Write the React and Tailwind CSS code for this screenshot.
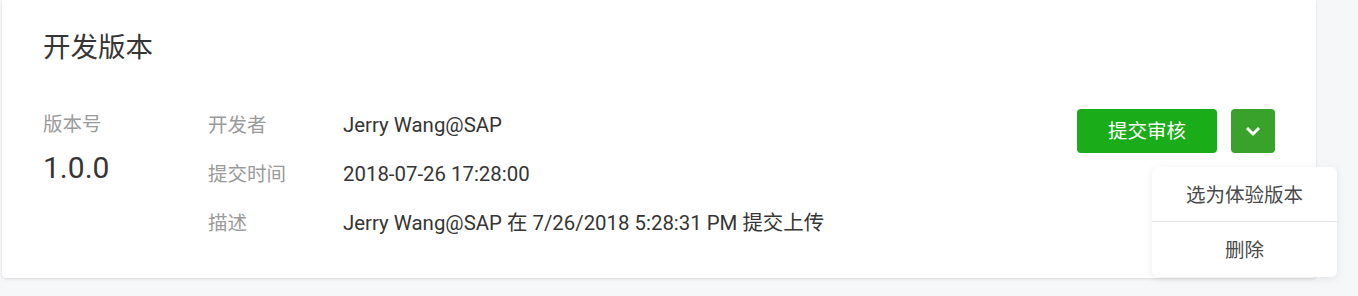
import React from "react";

const rows = [
  { label: "开发者", value: "Jerry Wang@SAP" },
  { label: "提交时间", value: "2018-07-26 17:28:00" },
  { label: "描述", value: "Jerry Wang@SAP 在 7/26/2018 5:28:31 PM 提交上传" },
];

export default function App() {
  return (
    <div
      className="relative h-[296px] w-[1358px] overflow-hidden bg-[#f6f7f9]"
      style={{ fontFamily: 'Roboto, "Noto Sans CJK SC", sans-serif' }}
    >
      {/* card */}
      <div className="ml-[2px] h-[278px] w-[1314px] rounded-b-[4px] bg-white px-[41px] pt-[30px] shadow-[0_1px_3px_rgba(0,0,0,0.12)]">
        <h2 className="text-[27.5px] leading-[36px] text-[#353535]">开发版本</h2>

        <div className="mt-[35px] flex">
          <div className="w-[165px] pt-[12px]">
            <div className="text-[19.5px] leading-[24px] text-[#9a9a9a]">版本号</div>
            <div className="mt-[11px] text-[30px] leading-[40px] text-[#353535]">1.0.0</div>
          </div>

          <div className="grid grid-cols-[135px_1fr] auto-rows-[49px] items-center text-[20.4px]">
            {rows.map((r) => (
              <React.Fragment key={r.label}>
                <div className="text-[19.5px] text-[#9a9a9a]">{r.label}</div>
                <div className="text-[#353535]">{r.value}</div>
              </React.Fragment>
            ))}
          </div>

          <div className="ml-auto mt-[8px] flex gap-[14px]">
            <button className="h-[44px] w-[140px] rounded-[4px] bg-[#1aad19] pt-[2px] text-[19.5px] text-white">
              提交审核
            </button>
            <button className="flex h-[44px] w-[44px] items-center justify-center rounded-[4px] bg-[#38a22b]">
              <svg width="16" height="11" viewBox="0 0 16 11" fill="none">
                <path d="M2 2l6 6 6-6" stroke="white" strokeWidth="3" />
              </svg>
            </button>
          </div>
        </div>
      </div>

      {/* dropdown menu */}
      <div className="absolute left-[1152px] top-[167px] w-[185px] rounded-[6px] bg-white shadow-[0_2px_10px_rgba(0,0,0,0.08)]">
        <div className="flex h-[55px] items-center justify-center border-b border-[#e7e7eb] pt-[3px] text-[19.5px] text-[#4a4a4a]">
          选为体验版本
        </div>
        <div className="flex h-[55px] items-center justify-center pt-[3px] text-[19.5px] text-[#4a4a4a]">
          删除
        </div>
      </div>
    </div>
  );
}
